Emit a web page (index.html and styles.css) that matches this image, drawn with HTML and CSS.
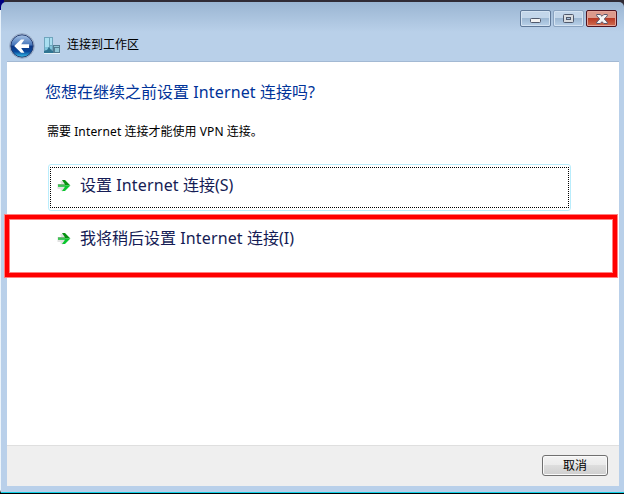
FILE: index.html
```html
<!DOCTYPE html>
<html lang="zh-CN">
<head>
<meta charset="utf-8">
<title>连接到工作区</title>
<link rel="stylesheet" href="styles.css">
</head>
<body>
<div class="window">
  <header class="titlebar">
    <div class="caption">
      <button class="cap" aria-label="最小化"><svg width="11" height="5"><rect x=".5" y=".5" width="10" height="4" rx="1" fill="#f2f2f2" stroke="#50596c"/></svg></button>
      <button class="cap cap-max" aria-label="最大化"><svg width="11" height="9"><rect x=".5" y=".5" width="10" height="8" rx="1" fill="#d8dce0" stroke="#50596c"/><rect x="3.5" y="3.5" width="4" height="2" fill="#a8c1dc" stroke="#50596c"/></svg></button>
      <button class="cap cap-close" aria-label="关闭"><svg width="12" height="10" viewBox="0 0 12 10"><path d="M.7.5h3.5L6 2.3 7.8.5h3.5v1.3L8.3 5l3 3.2v1.3H7.8L6 7.7 4.2 9.5H.7V8.2l3-3.2-3-3.2z" fill="#f4f4f4" stroke="#59566b"/></svg></button>
    </div>
    <div class="heading-row">
      <svg class="back" width="26" height="26" viewBox="0 0 26 26">
        <defs>
          <linearGradient id="ball" x2="0" y2="1"><stop offset="0" stop-color="#a9c4e6"/><stop offset=".46" stop-color="#4474b9"/><stop offset=".5" stop-color="#0b3685"/><stop offset=".75" stop-color="#09499c"/><stop offset="1" stop-color="#38c5ee"/></linearGradient>
        </defs>
        <circle cx="13" cy="13" r="12.3" fill="#dce8f5" stroke="#8296b4" stroke-width=".8"/>
        <circle cx="13" cy="13" r="11.2" fill="url(#ball)" stroke="#263e70" stroke-width="1"/>
        <path d="M5.2 13.1 12 6.4h3.4l-3.2 4.8h7.9v3.8h-7.9l3.2 4.8H12z" fill="#fff"/>
      </svg>
      <svg class="place" width="17" height="17" viewBox="0 0 17 17">
        <rect x="0" y="0" width="9" height="16" fill="#6fa5bd"/>
        <path d="M1 1h4v9H1zM6 1h2v7H6z" fill="#a9def0"/>
        <path d="M1 10h3v3H1zM6 9h2v3H6z" fill="#7fc4dc"/>
        <path d="M0 16v-2l3-1 2-3 2 3 2 1v2z" fill="#2f7592"/>
        <rect x="9" y="8" width="7" height="8" fill="#517b91"/>
        <path d="M10 9h5v1h-5zM11 11h4v4h-4z" fill="#8fc6d6"/>
        <path d="M0 16.5h16" stroke="#e5f2f7"/>
      </svg>
      <span class="title">连接到工作区</span>
    </div>
  </header>
  <main class="content">
    <h1>您想在继续之前设置 <span class="latin">Internet</span> 连接吗?</h1>
    <p>需要 <span class="latin">Internet</span> 连接才能使用 <span class="latin">VPN</span> 连接。</p>
    <a class="command focused">
      <svg class="arrow" width="16" height="15" viewBox="0 0 16 15"><path d="M1.5 7.5h6L5.5 3M1.5 9.5h6L5.5 13" fill="none" stroke="#e2e2e2" stroke-width="3"/><path d="M2 6.5h7L6 2h3l5.4 5.5H2z" fill="#079112"/><path d="M2 7.5h12.4L9 13H6l3-4.3H2z" fill="#0bc62f"/></svg>
      <span>设置 <span class="latin">Internet</span> 连接(S)</span>
    </a>
    <a class="command">
      <svg class="arrow" width="16" height="15" viewBox="0 0 16 15"><path d="M1.5 7.5h6L5.5 3M1.5 9.5h6L5.5 13" fill="none" stroke="#e2e2e2" stroke-width="3"/><path d="M2 6.5h7L6 2h3l5.4 5.5H2z" fill="#079112"/><path d="M2 7.5h12.4L9 13H6l3-4.3H2z" fill="#0bc62f"/></svg>
      <span>我将稍后设置 <span class="latin">Internet</span> 连接(I)</span>
    </a>
  </main>
  <footer><button class="cancel">取消</button></footer>
</div>
<div class="highlight"></div>
</body>
</html>
```
FILE: styles.css
```css
* { box-sizing: border-box; }
body {
  margin: 0;
  width: 624px;
  height: 494px;
  overflow: hidden;
  padding: 2px 0 0 1px;
  background: linear-gradient(90deg, #000080 0, #000080 4px, #302b35 4px) top / 100% 10px no-repeat, linear-gradient(#e8f2fb 120px, #edf5fb 490px, #000 493px);
  font-family: "Noto Sans", "Noto Sans CJK SC", sans-serif;
}
.window {
  width: 623px;
  height: 491px;
  display: flex;
  flex-direction: column;
  padding: 0 5px 6px 6px;
  border-bottom: 1px solid #12cfe5;
  border-radius: 5px 5px 0 0;
  background: linear-gradient(#9ab5d2 0, #b9d0e9 30px, #b9d0ea 100%);
  box-shadow: 0 2px 0 #000;
}
.titlebar { height: 60px; flex: none; border-bottom: 1px solid #a3b9d3; }
.caption { display: flex; justify-content: flex-end; gap: 2px; height: 25px; padding: 8px 2px 0 0; }
.cap {
  width: 31px;
  height: 17px;
  padding: 0;
  display: flex;
  align-items: center;
  justify-content: center;
  border: 1px solid #5f7898;
  border-radius: 2px;
  background: linear-gradient(#c3d6ea 48%, #9db8d3 50%, #b9d1e9);
  box-shadow: inset 0 0 0 1px #d4e3f2;
}
.cap:first-child { padding-top: 3px; }
.cap-max { border-color: #8aa3c0; }
.cap-close { border-color: #4f1320; background: linear-gradient(#dc9a8c 45%, #b93a25 50%, #cf6d50); box-shadow: inset 0 0 0 1px #e5a599; }
.heading-row { display: flex; align-items: center; height: 34px; padding: 1px 0 0 2px; }
.back { margin-top: 2px; }
.place { margin: 2px 0 0 9px; }
.title { margin: 1px 0 0 6px; font-size: 12px; line-height: 18px; white-space: nowrap; }
.content { height: 383px; flex: none; padding: 17px 48px 0 38px; background: #fff; }
h1 { margin: 0; height: 26px; font-size: 16px; line-height: 26px; font-weight: 400; color: #003399; white-space: nowrap; }
.latin { letter-spacing: .15px; }
p { margin: 17px 0 0 2px; height: 20px; font-size: 12px; line-height: 20px; color: #000; white-space: nowrap; }
.command {
  display: flex;
  gap: 8px;
  width: 523px;
  height: 47px;
  margin: 0 0 6px 3px;
  padding: 8px 0 0 8px;
  color: #151c55;
  font-size: 16px;
  line-height: 26px;
  white-space: nowrap;
}
.focused {
  margin-top: 22px;
  padding: 7px 0 0 7px;
  border: 1px solid #b9edfc;
  border-radius: 3px;
  position: relative;
}
.focused::after {
  content: "";
  position: absolute;
  inset: 2px 1px 2px 1px;
  background: repeating-linear-gradient(90deg, #000 0 1px, #fff 1px 2px) top / 100% 1px no-repeat, repeating-linear-gradient(90deg, #000 0 1px, #fff 1px 2px) bottom / 100% 1px no-repeat, repeating-linear-gradient(#000 0 1px, #fff 1px 2px) left / 1px 100% no-repeat, repeating-linear-gradient(#000 0 1px, #fff 1px 2px) right / 1px 100% no-repeat;
}
.arrow { flex: none; margin-top: 6px; }
footer { height: 41px; flex: none; display: flex; justify-content: flex-end; padding: 9px 11px 0 0; border-top: 1px solid #dfdfdf; background: #efefef; }
.cancel {
  width: 66px;
  height: 21px;
  padding: 0;
  border: 1px solid #707070;
  border-radius: 3px;
  background: linear-gradient(#f3f3f3, #ebebeb 48%, #dddddd 50%, #cfcfcf);
  box-shadow: inset 0 0 0 1px #fafafa;
  font: 12px/17px "Noto Sans", "Noto Sans CJK SC", sans-serif;
  color: #000;
}
.highlight {
  position: absolute;
  left: 4px;
  top: 214px;
  width: 614px;
  height: 64px;
  border: 6px solid #ff8080;
  pointer-events: none;
}
.highlight::after { content: ""; position: absolute; inset: -5px; border: 4px solid #f00; }
```
